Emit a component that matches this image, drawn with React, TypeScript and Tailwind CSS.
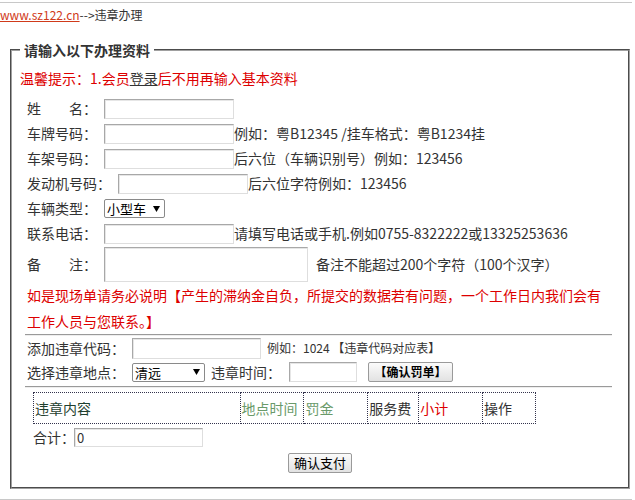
import React from "react";

const inputCls =
  "h-[20px] bg-white border border-[#a8a8a8] border-b-[#dedede] border-r-[#dedede] shadow-[inset_1px_1px_0_#e6e6e6] px-[2px] text-[13px] leading-[18px] outline-none";

function Row({ children, h = "h-[25px]" }: { children: React.ReactNode; h?: string }) {
  return <div className={`flex items-center ${h}`}>{children}</div>;
}

function FakeSelect({ label, w }: { label: string; w: string }) {
  return (
    <div className={`${w} h-[19px] flex items-center justify-between bg-white border border-[#8a8a8a] rounded-[2px] pl-[2px] pr-[4px]`}>
      <span className="text-[13px] leading-[17px] text-black">{label}</span>
      <svg width="7" height="6" viewBox="0 0 7 6" className="shrink-0">
        <path d="M0 0h7L3.5 6z" fill="#000" />
      </svg>
    </div>
  );
}

export default function App() {
  return (
    <div className="w-[635px] h-[500px] bg-white text-[#333] font-['Noto_Sans_CJK_SC','Noto_Sans',sans-serif] overflow-hidden">
      {/* breadcrumb */}
      <div className="mt-[2px] w-[632px] border-t border-[#c8c8c8]" />
      <div className="h-[24px] flex items-center text-[12px] leading-[24px]">
        <a className="text-[#d03a1a] underline">www.sz122.cn</a>
        <span className="text-[#333]">--&gt;违章办理</span>
      </div>

      <fieldset className="mt-[13px] ml-[10px] w-[620px] border-2 [border-style:groove] border-[#a0a0a0] px-[8px] pb-[14px]">
        <legend className="px-[4px] text-[14px] leading-[20px] font-bold text-[#333]">请输入以下办理资料</legend>

        {/* hint */}
        <div className="h-[36px] flex items-center text-[14px] text-[#d00]">
          温馨提示：1.会员<span className="text-[#333] underline">登录</span>后不用再输入基本资料
        </div>

        <div className="pl-[7px] text-[14px]">
          <Row>
            <span className="w-[70px] flex">
              <span>姓</span>
              <span className="ml-[28px]">名：</span>
            </span>
            <input className={`${inputCls} ml-[7px] w-[130px]`} />
          </Row>
          <Row>
            <span>车牌号码：</span>
            <input className={`${inputCls} ml-[7px] w-[130px]`} />
            <span>例如：粤B12345 /挂车格式：粤B1234挂</span>
          </Row>
          <Row>
            <span>车架号码：</span>
            <input className={`${inputCls} ml-[7px] w-[130px]`} />
            <span>后六位（车辆识别号）例如：123456</span>
          </Row>
          <Row>
            <span>发动机号码：</span>
            <input className={`${inputCls} ml-[7px] w-[130px]`} />
            <span>后六位字符例如：123456</span>
          </Row>
          <Row>
            <span>车辆类型：</span>
            <div className="ml-[7px]">
              <FakeSelect label="小型车" w="w-[61px]" />
            </div>
          </Row>
          <Row>
            <span>联系电话：</span>
            <input className={`${inputCls} ml-[7px] w-[130px]`} />
            <span>请填写电话或手机.例如0755-8322222或13325253636</span>
          </Row>
          <Row h="h-[36px]">
            <span className="w-[70px] flex">
              <span>备</span>
              <span className="ml-[28px]">注：</span>
            </span>
            <textarea className={`${inputCls} ml-[7px] w-[204px] !h-[35px] resize-none`} />
            <span className="ml-[8px]">备注不能超过200个字符（100个汉字）</span>
          </Row>

          <p className="text-[#d00] leading-[26px] pr-[10px]">
            如是现场单请务必说明【产生的滞纳金自负，所提交的数据若有问题，一个工作日内我们会有工作人员与您联系。】
          </p>
        </div>

        <div className="ml-[5px] mr-[8px] h-[2px] border-t border-t-[#9a9a9a] border-b border-b-[#eeeeee]" />

        <div className="pl-[7px] text-[14px]">
          <Row h="h-[24px]">
            <span>添加违章代码：</span>
            <input className={`${inputCls} ml-[7px] w-[129px] !h-[21px]`} />
            <span className="ml-[6px] text-[12px]">例如：1024 【违章代码对应表】</span>
          </Row>
          <Row h="h-[24px]">
            <span>选择违章地点：</span>
            <div className="ml-[7px]">
              <FakeSelect label="清远" w="w-[73px]" />
            </div>
            <span className="ml-[6px]">违章时间：</span>
            <input className={`${inputCls} ml-[8px] w-[68px]`} />
            <button className="ml-[11px] w-[85px] h-[20px] border border-[#9a9a9a] rounded-[2px] bg-gradient-to-b from-[#fbfbfb] to-[#e2e2e2] text-[12px] font-bold leading-[18px] text-black">
              【确认罚单】
            </button>
          </Row>
        </div>

        <div className="mt-[2px] ml-[5px] mr-[8px] h-[2px] border-t border-t-[#9a9a9a] border-b border-b-[#eeeeee]" />

        <table className="mt-[4px] ml-[13px] w-[503px] border-collapse text-[14px]">
          <tbody>
            <tr className="h-[31px]">
              <td className="w-[207px] border border-dotted border-[#33334d] pl-[1px] text-[#1f3f2f]">违章内容</td>
              <td className="w-[64px] border border-dotted border-[#33334d] pl-[1px] text-[#6a9a6a]">地点时间</td>
              <td className="w-[64px] border border-dotted border-[#33334d] pl-[1px] text-[#6a9a6a]">罚金</td>
              <td className="w-[51px] border border-dotted border-[#33334d] pl-[1px] text-[#333]">服务费</td>
              <td className="w-[64px] border border-dotted border-[#33334d] pl-[1px] text-[#d00]">小计</td>
              <td className="w-[53px] border border-dotted border-[#33334d] pl-[1px] text-[#333]">操作</td>
            </tr>
          </tbody>
        </table>

        <div className="ml-[13px] h-[26px] flex items-center text-[14px]">
          <span>合计：</span>
          <input className={`${inputCls} ml-[-1px] w-[129px] !h-[19px]`} defaultValue="0" />
        </div>

        <div className="mt-[3px] flex justify-center">
          <button className="w-[64px] h-[20px] border border-[#9a9a9a] rounded-[2px] bg-gradient-to-b from-[#fbfbfb] to-[#e2e2e2] text-[13px] leading-[18px] text-black">
            确认支付
          </button>
        </div>
      </fieldset>

      <div className="mt-[10px] w-[632px] border-t border-[#c8c8c8]" />
    </div>
  );
}
